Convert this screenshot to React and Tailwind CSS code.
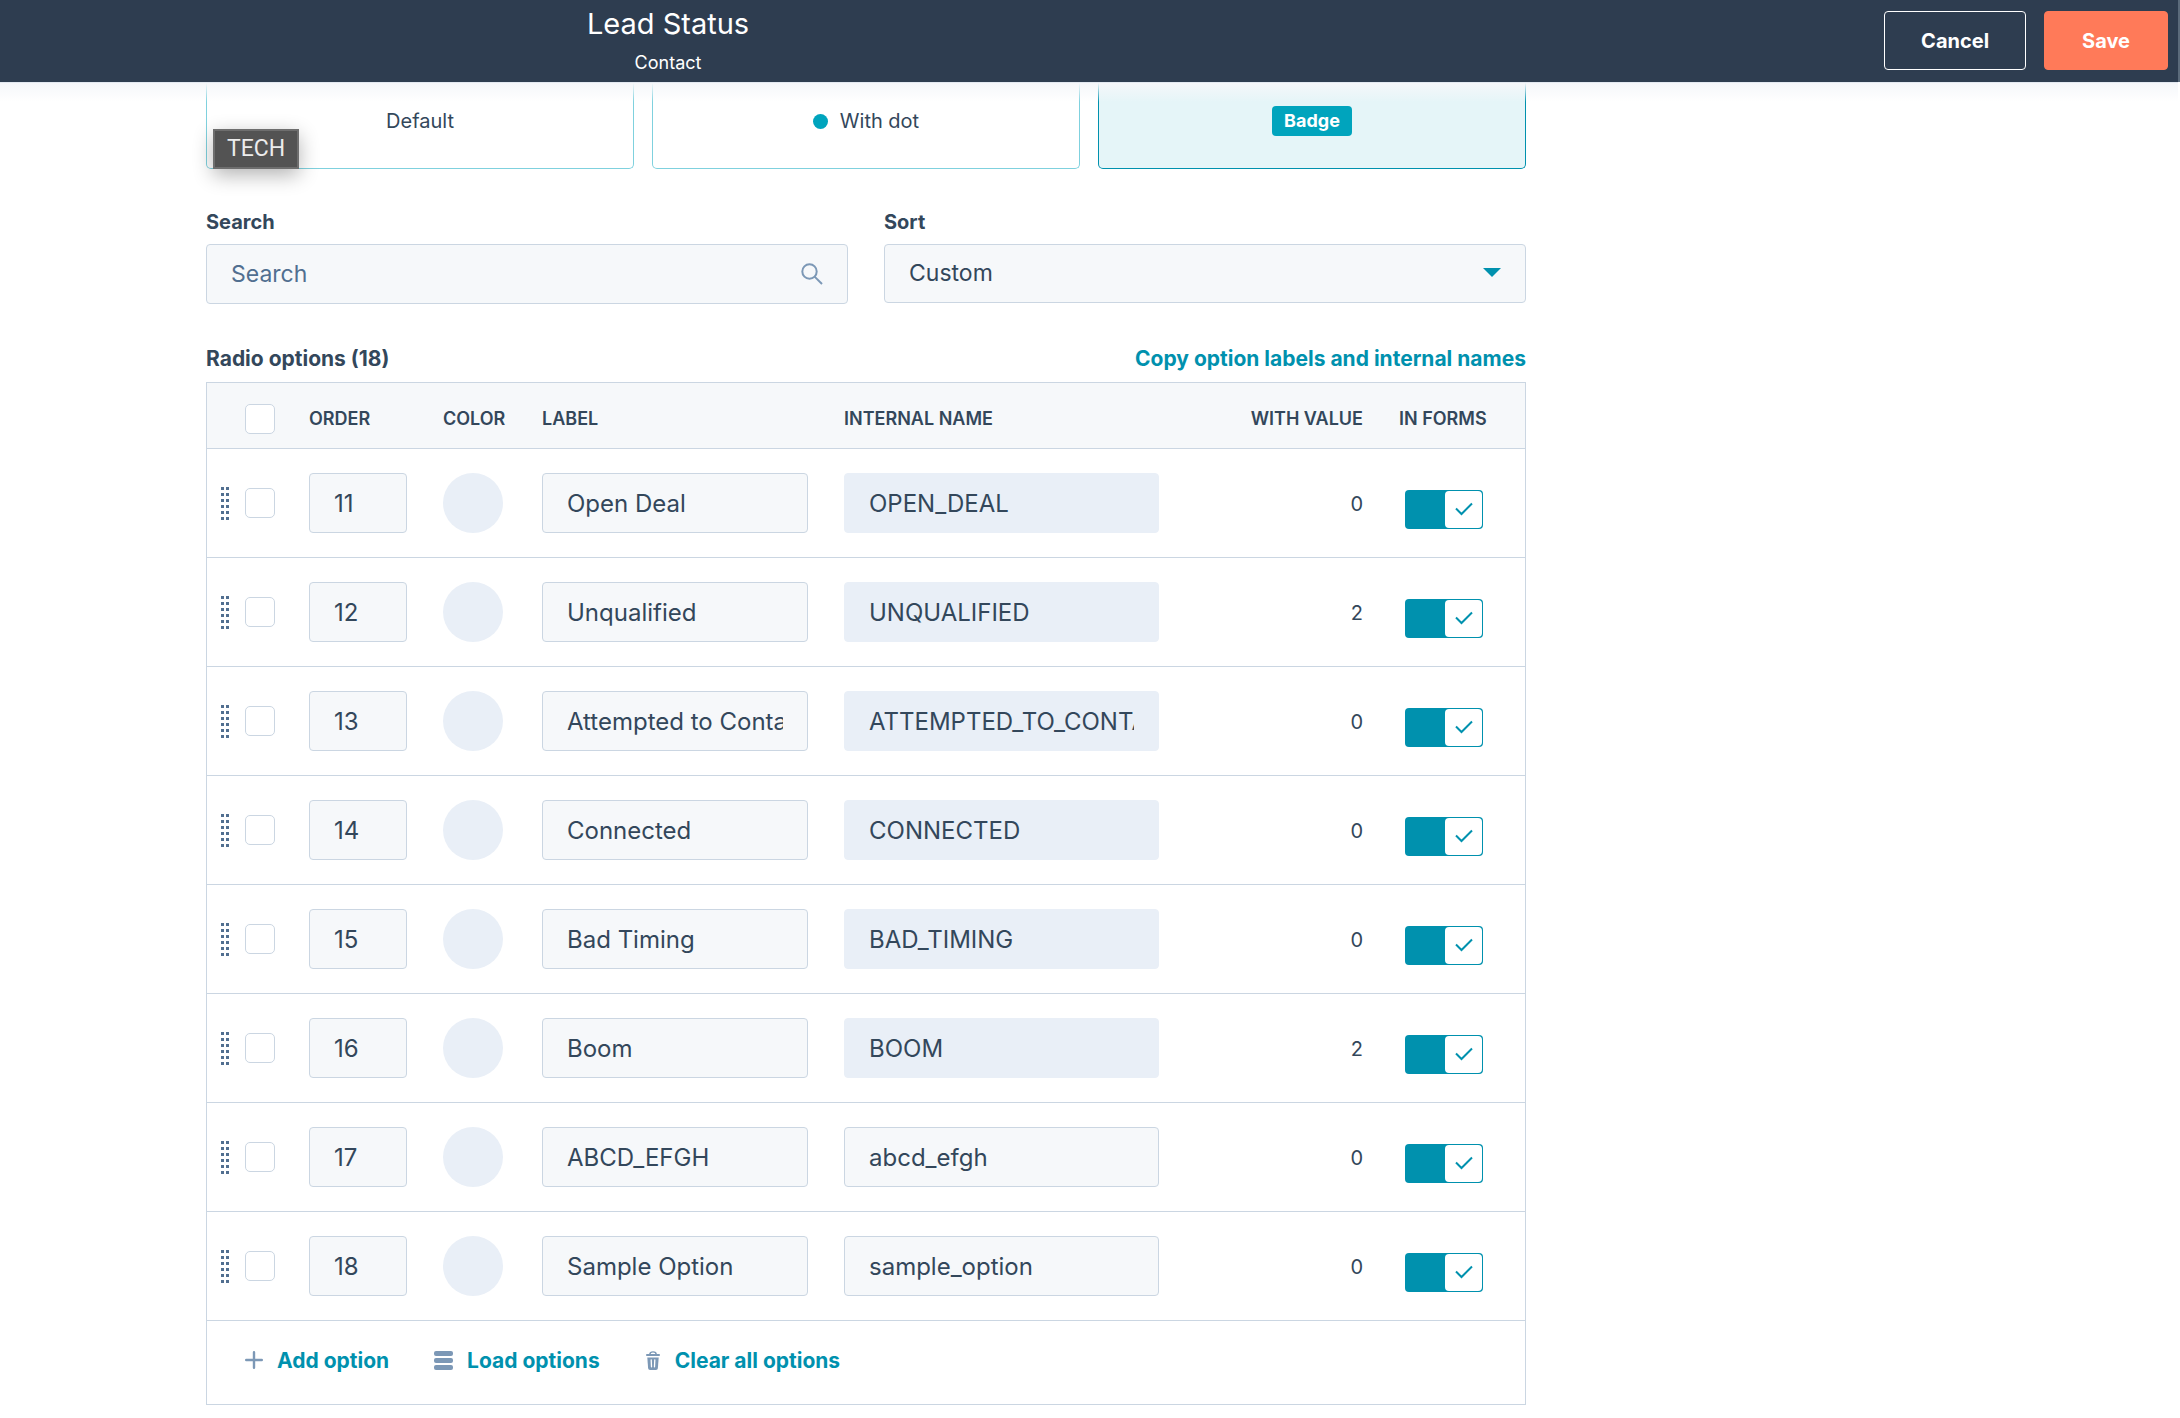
import React from "react";

const options = [
  { order: 11, label: "Open Deal", name: "OPEN_DEAL", count: 0, locked: true },
  { order: 12, label: "Unqualified", name: "UNQUALIFIED", count: 2, locked: true },
  { order: 13, label: "Attempted to Contact", name: "ATTEMPTED_TO_CONTACT", count: 0, locked: true },
  { order: 14, label: "Connected", name: "CONNECTED", count: 0, locked: true },
  { order: 15, label: "Bad Timing", name: "BAD_TIMING", count: 0, locked: true },
  { order: 16, label: "Boom", name: "BOOM", count: 2, locked: true },
  { order: 17, label: "ABCD_EFGH", name: "abcd_efgh", count: 0, locked: false },
  { order: 18, label: "Sample Option", name: "sample_option", count: 0, locked: false },
];

const fieldClass =
  "block h-[60px] w-full rounded-[4px] border border-[#cbd6e2] bg-[#f6f8fa] px-6 text-2xl font-normal text-[#33475b] outline-none";
const lockedClass =
  "block h-[60px] w-full rounded-[4px] border border-[#e9eff7] bg-[#e9eff7] px-6 text-2xl font-normal text-[#33475b] outline-none";
const headClass = "h-[66px] border-b border-[#cbd6e2] bg-[#f6f8fa] pt-1.5 text-left text-lg font-semibold";
const cellClass = "h-[109px] border-b border-[#cbd6e2] p-0 align-middle";

function Header() {
  return (
    <header className="relative z-10 flex h-[82px] items-start justify-between border-r-2 border-[#5b6b7b] bg-[#2e3d50] text-white">
      <div className="w-[1336px] text-center">
        <h1 className="text-[29px] leading-[48px] font-normal">Lead Status</h1>
        <p className="text-lg leading-[30px] font-normal">Contact</p>
      </div>
      <div className="flex gap-[18px] pt-[11px] pr-2.5">
        <button type="button" className="h-[59px] rounded-[4px] border border-white px-9 text-xl font-bold">
          Cancel
        </button>
        <button
          type="button"
          className="h-[59px] rounded-[4px] border border-[#ff7a59] bg-[#ff7a59] px-[37px] text-xl font-bold"
        >
          Save
        </button>
      </div>
      <div className="pointer-events-none absolute top-full right-0 left-0 h-5 border-t border-[#e3e9f1] bg-linear-to-b from-[#f5f7fa] to-[#f5f7fa00]" />
    </header>
  );
}

function StyleCard({ selected, children }) {
  return (
    <label
      className={
        selected
          ? "flex h-[87px] items-center justify-center rounded-b-[5px] border border-t-0 border-[#0091ae] bg-[#e5f5f8] pb-2"
          : "flex h-[87px] items-center justify-center rounded-b-[5px] border border-t-0 border-[#7fd1de] bg-white pb-2"
      }
    >
      <input type="radio" name="style" defaultChecked={selected} className="sr-only" />
      {children}
    </label>
  );
}

function Grip() {
  return (
    <svg width="8" height="33" viewBox="0 0 8 33" fill="#516f90" aria-hidden="true">
      {[0, 6, 12, 18, 24, 30].map((y) => (
        <g key={y}>
          <rect x="0" y={y} width="3" height="3" />
          <rect x="5" y={y} width="3" height="3" />
        </g>
      ))}
    </svg>
  );
}

function TickBox({ label }) {
  return (
    <input
      type="checkbox"
      aria-label={label}
      className="block size-[30px] appearance-none rounded-[5px] border border-[#cbd6e2] bg-white"
    />
  );
}

function Toggle({ label }) {
  return (
    <label className="relative mt-3 ml-1.5 flex h-[39px] w-[78px] justify-end rounded-[4px] bg-[#0091ae] p-px">
      <input type="checkbox" role="switch" defaultChecked aria-label={label} className="sr-only" />
      <span className="flex w-[37px] items-center justify-center rounded-[4px] bg-white">
        <svg width="18" height="14" viewBox="0 0 18 14" fill="none" stroke="#0091ae" strokeWidth="2" aria-hidden="true">
          <path d="M1 6.5 6.5 12 17 1.5" />
        </svg>
      </span>
    </label>
  );
}

function OptionRow({ option }) {
  return (
    <tr>
      <td className={cellClass}>
        <div className="flex items-center gap-4 pl-3.5">
          <Grip />
          <TickBox label={`Select ${option.label}`} />
        </div>
      </td>
      <td className={cellClass}>
        <div className="pr-9">
          <input type="text" aria-label="Order" defaultValue={option.order} className={fieldClass} />
        </div>
      </td>
      <td className={cellClass}>
        <button type="button" aria-label="Pick a color" className="block size-[60px] rounded-full bg-[#e9eff7]" />
      </td>
      <td className={cellClass}>
        <div className="pr-9">
          <input type="text" aria-label="Label" defaultValue={option.label} className={fieldClass} />
        </div>
      </td>
      <td className={cellClass}>
        <div className="pr-9">
          <input
            type="text"
            aria-label="Internal name"
            defaultValue={option.name}
            readOnly={option.locked}
            className={option.locked ? lockedClass : fieldClass}
          />
        </div>
      </td>
      <td className={cellClass}>
        <div className="pt-0.5 text-right text-xl font-normal">{option.count}</div>
      </td>
      <td className={cellClass}>
        <div className="pl-9">
          <Toggle label={`Show ${option.label} in forms`} />
        </div>
      </td>
    </tr>
  );
}

function FooterAction({ icon, children }) {
  return (
    <button type="button" className="flex items-center gap-3.5 text-[21px] leading-[30px] font-bold text-[#0091ae]">
      {icon}
      {children}
    </button>
  );
}

const plusIcon = (
  <svg width="18" height="20" viewBox="0 0 18 20" stroke="#7c98b6" strokeWidth="2.4" strokeLinecap="round" aria-hidden="true">
    <path d="M1.2 9h15.6M9 1.2v15.6" />
  </svg>
);

const listIcon = (
  <svg width="19" height="20" viewBox="0 0 19 20" fill="#7c98b6" aria-hidden="true">
    <rect width="19" height="5" rx="2" />
    <rect y="7" width="19" height="5" rx="2" />
    <rect y="14" width="19" height="5" rx="2" />
  </svg>
);

const trashIcon = (
  <svg width="16" height="20" viewBox="0 0 16 20" aria-hidden="true">
    <path d="M4.8 3.5c0-1.7 1.2-2.6 3.2-2.6s3.2.9 3.2 2.6" fill="none" stroke="#7c98b6" strokeWidth="1.4" />
    <rect x="1" y="3.1" width="14" height="1.9" rx="0.9" fill="#7c98b6" />
    <path d="M2.3 6.4h11.4l-.8 10.7c-.1 1.2-.8 1.9-2 1.9H5.1c-1.2 0-1.9-.7-2-1.9z" fill="#7c98b6" />
    <path d="M6.2 8.8l.3 7M9.8 8.8l-.3 7" stroke="#fff" strokeWidth="1.3" strokeLinecap="round" />
  </svg>
);

export default function App() {
  return (
    <div className="min-h-screen bg-white font-[Inter,sans-serif] text-[#33475b]">
      <Header />
      <main className="w-full max-w-[1526px] pb-3 pl-[206px]">
        <div className="relative">
          <div className="grid grid-cols-3 gap-[18px] text-xl font-normal">
            <StyleCard>Default</StyleCard>
            <StyleCard>
              <span className="mr-3 size-[15px] rounded-full bg-[#00a4bd]" />
              With dot
            </StyleCard>
            <StyleCard selected>
              <span className="rounded-[4px] bg-[#00a4bd] px-3 text-lg leading-[30px] font-bold text-white">Badge</span>
            </StyleCard>
          </div>
          <div className="absolute bottom-0 left-[7px] flex h-10 w-[86px] items-center justify-center border-2 border-[#6e6e6e] bg-[#535353] font-[Roboto,sans-serif] text-[23px] text-[#ececec] shadow-[0_6px_20px_rgba(0,0,0,0.3)]">
            TECH
          </div>
        </div>

        <div className="mt-[38px] grid grid-cols-2 gap-9">
          <div>
            <label htmlFor="search" className="mb-[7px] block text-xl leading-[30px] font-bold">
              Search
            </label>
            <div className="relative">
              <input
                id="search"
                type="text"
                placeholder="Search"
                className="block h-[60px] w-full rounded-[4px] border border-[#cbd6e2] bg-[#f6f8fa] pr-16 pl-6 text-[23px] font-normal outline-none placeholder:text-[#516f90]"
              />
              <svg
                width="22"
                height="22"
                viewBox="0 0 22 22"
                fill="none"
                stroke="#7c98b6"
                strokeWidth="2"
                className="absolute top-[19px] right-[25px]"
                aria-hidden="true"
              >
                <circle cx="8.5" cy="8.5" r="7.2" />
                <path d="M13.6 13.6 21 21" />
              </svg>
            </div>
          </div>
          <div>
            <label htmlFor="sort" className="mb-[7px] block text-xl leading-[30px] font-bold">
              Sort
            </label>
            <div className="relative">
              <select
                id="sort"
                className="block h-[59px] w-full appearance-none rounded-[4px] border border-[#cbd6e2] bg-[#f6f8fa] px-6 text-[23px] font-normal outline-none"
              >
                <option>Custom</option>
              </select>
              <svg
                width="18"
                height="9"
                viewBox="0 0 18 9"
                fill="#0091ae"
                className="pointer-events-none absolute top-6 right-[25px]"
                aria-hidden="true"
              >
                <path d="M0 0h18L9 9z" />
              </svg>
            </div>
          </div>
        </div>

        <div className="mt-10 mb-2 flex justify-between text-[21px] leading-[30px] font-bold">
          <h2>Radio options (18)</h2>
          <a href="#copy" className="text-[#0091ae]">
            Copy option labels and internal names
          </a>
        </div>

        <div className="border border-[#cbd6e2]">
          <table className="w-full table-fixed border-separate border-spacing-0">
            <colgroup>
              <col className="w-[102px]" />
              <col className="w-[134px]" />
              <col className="w-[99px]" />
              <col className="w-[302px]" />
              <col />
              <col className="w-[168px]" />
              <col className="w-[162px]" />
            </colgroup>
            <thead>
              <tr>
                <th className={headClass}>
                  <div className="pl-[38px]">
                    <TickBox label="Select all options" />
                  </div>
                </th>
                <th className={headClass}>ORDER</th>
                <th className={headClass}>COLOR</th>
                <th className={headClass}>LABEL</th>
                <th className={headClass}>INTERNAL NAME</th>
                <th className={headClass}>
                  <div className="text-right">WITH VALUE</div>
                </th>
                <th className={headClass}>
                  <div className="pl-9">IN FORMS</div>
                </th>
              </tr>
            </thead>
            <tbody>
              {options.map((option) => (
                <OptionRow key={option.order} option={option} />
              ))}
            </tbody>
          </table>
          <div className="flex gap-[45px] pt-[25px] pb-7 pl-[38px]">
            <FooterAction icon={plusIcon}>Add option</FooterAction>
            <FooterAction icon={listIcon}>Load options</FooterAction>
            <FooterAction icon={trashIcon}>Clear all options</FooterAction>
          </div>
        </div>
      </main>
    </div>
  );
}
